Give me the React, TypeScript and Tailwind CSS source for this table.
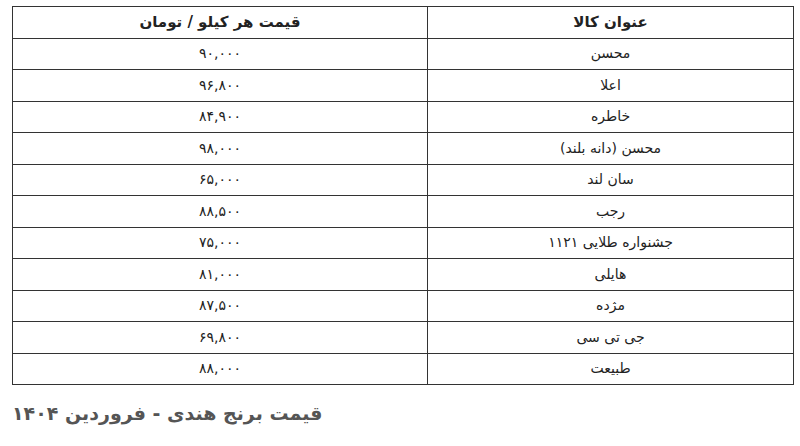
const rows: [string, string][] = [
  ["محسن", "۹۰,۰۰۰"],
  ["اعلا", "۹۶,۸۰۰"],
  ["خاطره", "۸۴,۹۰۰"],
  ["محسن (دانه بلند)", "۹۸,۰۰۰"],
  ["سان لند", "۶۵,۰۰۰"],
  ["رجب", "۸۸,۵۰۰"],
  ["جشنواره طلایی ۱۱۲۱", "۷۵,۰۰۰"],
  ["هایلی", "۸۱,۰۰۰"],
  ["مژده", "۸۷,۵۰۰"],
  ["جی تی سی", "۶۹,۸۰۰"],
  ["طبیعت", "۸۸,۰۰۰"],
];

export default function App() {
  return (
    <div className="w-[800px] h-[446px] bg-white overflow-hidden pt-[6px] pl-[12px] pr-[6px]" style={{ fontFamily: '"DejaVu Sans", sans-serif' }}>
      <table dir="rtl" className="w-[782px] border-collapse text-[#222]">
        <thead>
          <tr className="h-[31.5px]">
            <th className="w-[366px] border border-[#333] text-[15px] font-bold text-center">عنوان کالا</th>
            <th className="border border-[#333] text-[15px] font-bold text-center">قیمت هر کیلو / تومان</th>
          </tr>
        </thead>
        <tbody>
          {rows.map(([name, price]) => (
            <tr key={name} className="h-[31.5px]">
              <td className="border border-[#333] text-[14px] text-center">{name}</td>
              <td className="border border-[#333] text-[14px] text-center">{price}</td>
            </tr>
          ))}
        </tbody>
      </table>
      <p dir="rtl" className="mt-[14px] text-left text-[19px] font-bold text-[#555]">
        قیمت برنج هندی - فروردین ۱۴۰۴
      </p>
    </div>
  );
}
